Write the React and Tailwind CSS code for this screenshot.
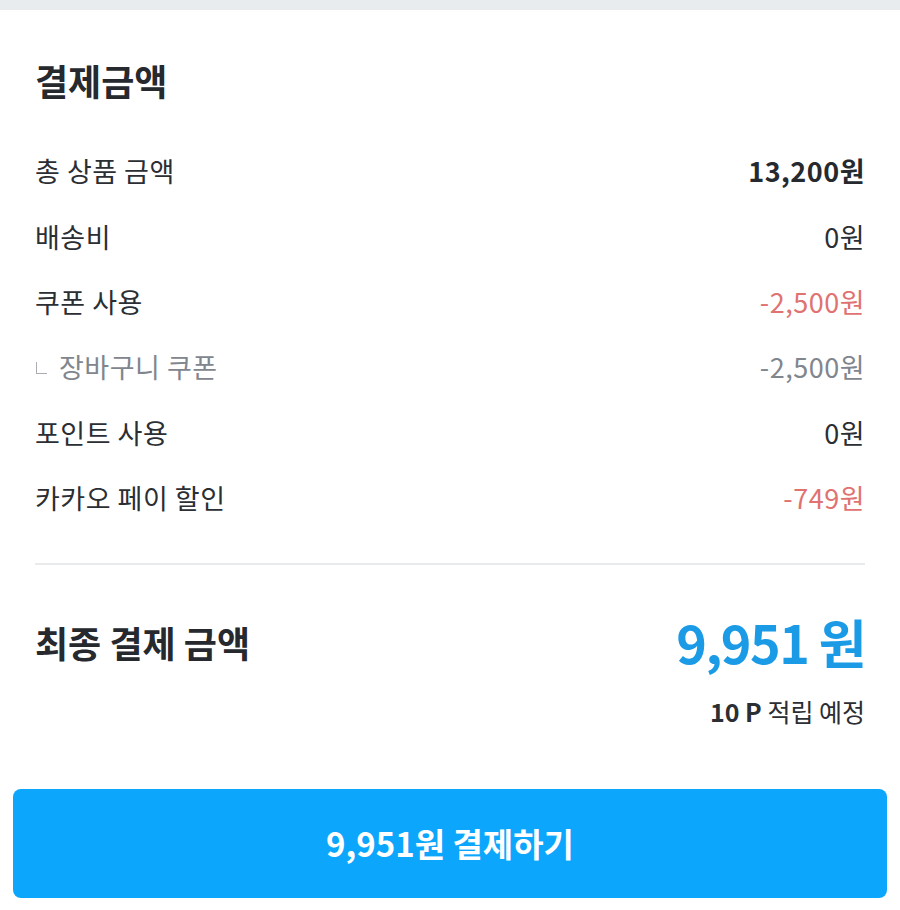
import React from "react";

const rows = [
  { label: "총 상품 금액", value: "13,200원", tone: "bold" },
  { label: "배송비", value: "0원" },
  { label: "쿠폰 사용", value: "-2,500원", tone: "red" },
  { label: "장바구니 쿠폰", value: "-2,500원", tone: "sub" },
  { label: "포인트 사용", value: "0원" },
  { label: "카카오 페이 할인", value: "-749원", tone: "red" },
];

function Row({ label, value, tone }) {
  const labelClass =
    tone === "sub" ? "text-[#7f868e]" : "text-[#2b2e33]";
  const valueClass =
    tone === "bold"
      ? "text-[#26292e] font-bold"
      : tone === "red"
      ? "text-[#e07272]"
      : tone === "sub"
      ? "text-[#7f868e]"
      : "text-[#2b2e33]";

  return (
    <div className="flex h-[65.3px] items-center justify-between text-[27px] tracking-[0.5px]">
      <div className={`flex items-center ${labelClass}`}>
        {tone === "sub" && (
          <span className="mr-[12px] ml-[1px] inline-block h-[12px] w-[11px] border-b border-l border-[#a8adb3]" />
        )}
        {label}
      </div>
      <div className={valueClass}>{value}</div>
    </div>
  );
}

export default function App() {
  return (
    <div
      className="min-h-screen bg-white"
      style={{ fontFamily: '"Noto Sans CJK KR", "Noto Sans", sans-serif' }}
    >
      <div className="h-[10px] bg-[#e9ecef]" />

      <div className="px-[35px]">
        <h2 className="pt-[48px] text-[36px] font-bold leading-[44px] text-[#26292e]">
          결제금액
        </h2>

        <div className="mt-[37px]">
          {rows.map((row) => (
            <Row key={row.label} {...row} />
          ))}
        </div>

        <div className="mt-[32px] h-[2px] bg-[#e8eaec]" />

        <div className="mt-[42px] flex h-[70px] items-center justify-between">
          <div className="text-[36px] font-bold text-[#26292e]">최종 결제 금액</div>
          <div className="text-[52px] font-bold leading-none tracking-[-1.5px] text-[#1b9be6]">
            9,951 원
          </div>
        </div>

        <div className="mt-[19px] text-right text-[25px] leading-[30px] text-[#2b2e33]">
          <span className="font-bold">10 P</span> 적립 예정
        </div>
      </div>

      <div className="mx-[13px] mt-[63px]">
        <button className="flex h-[109px] w-full items-center justify-center rounded-[8px] bg-[#0ca6fd] text-[33px] font-bold text-white">
          9,951원 결제하기
        </button>
      </div>
    </div>
  );
}
